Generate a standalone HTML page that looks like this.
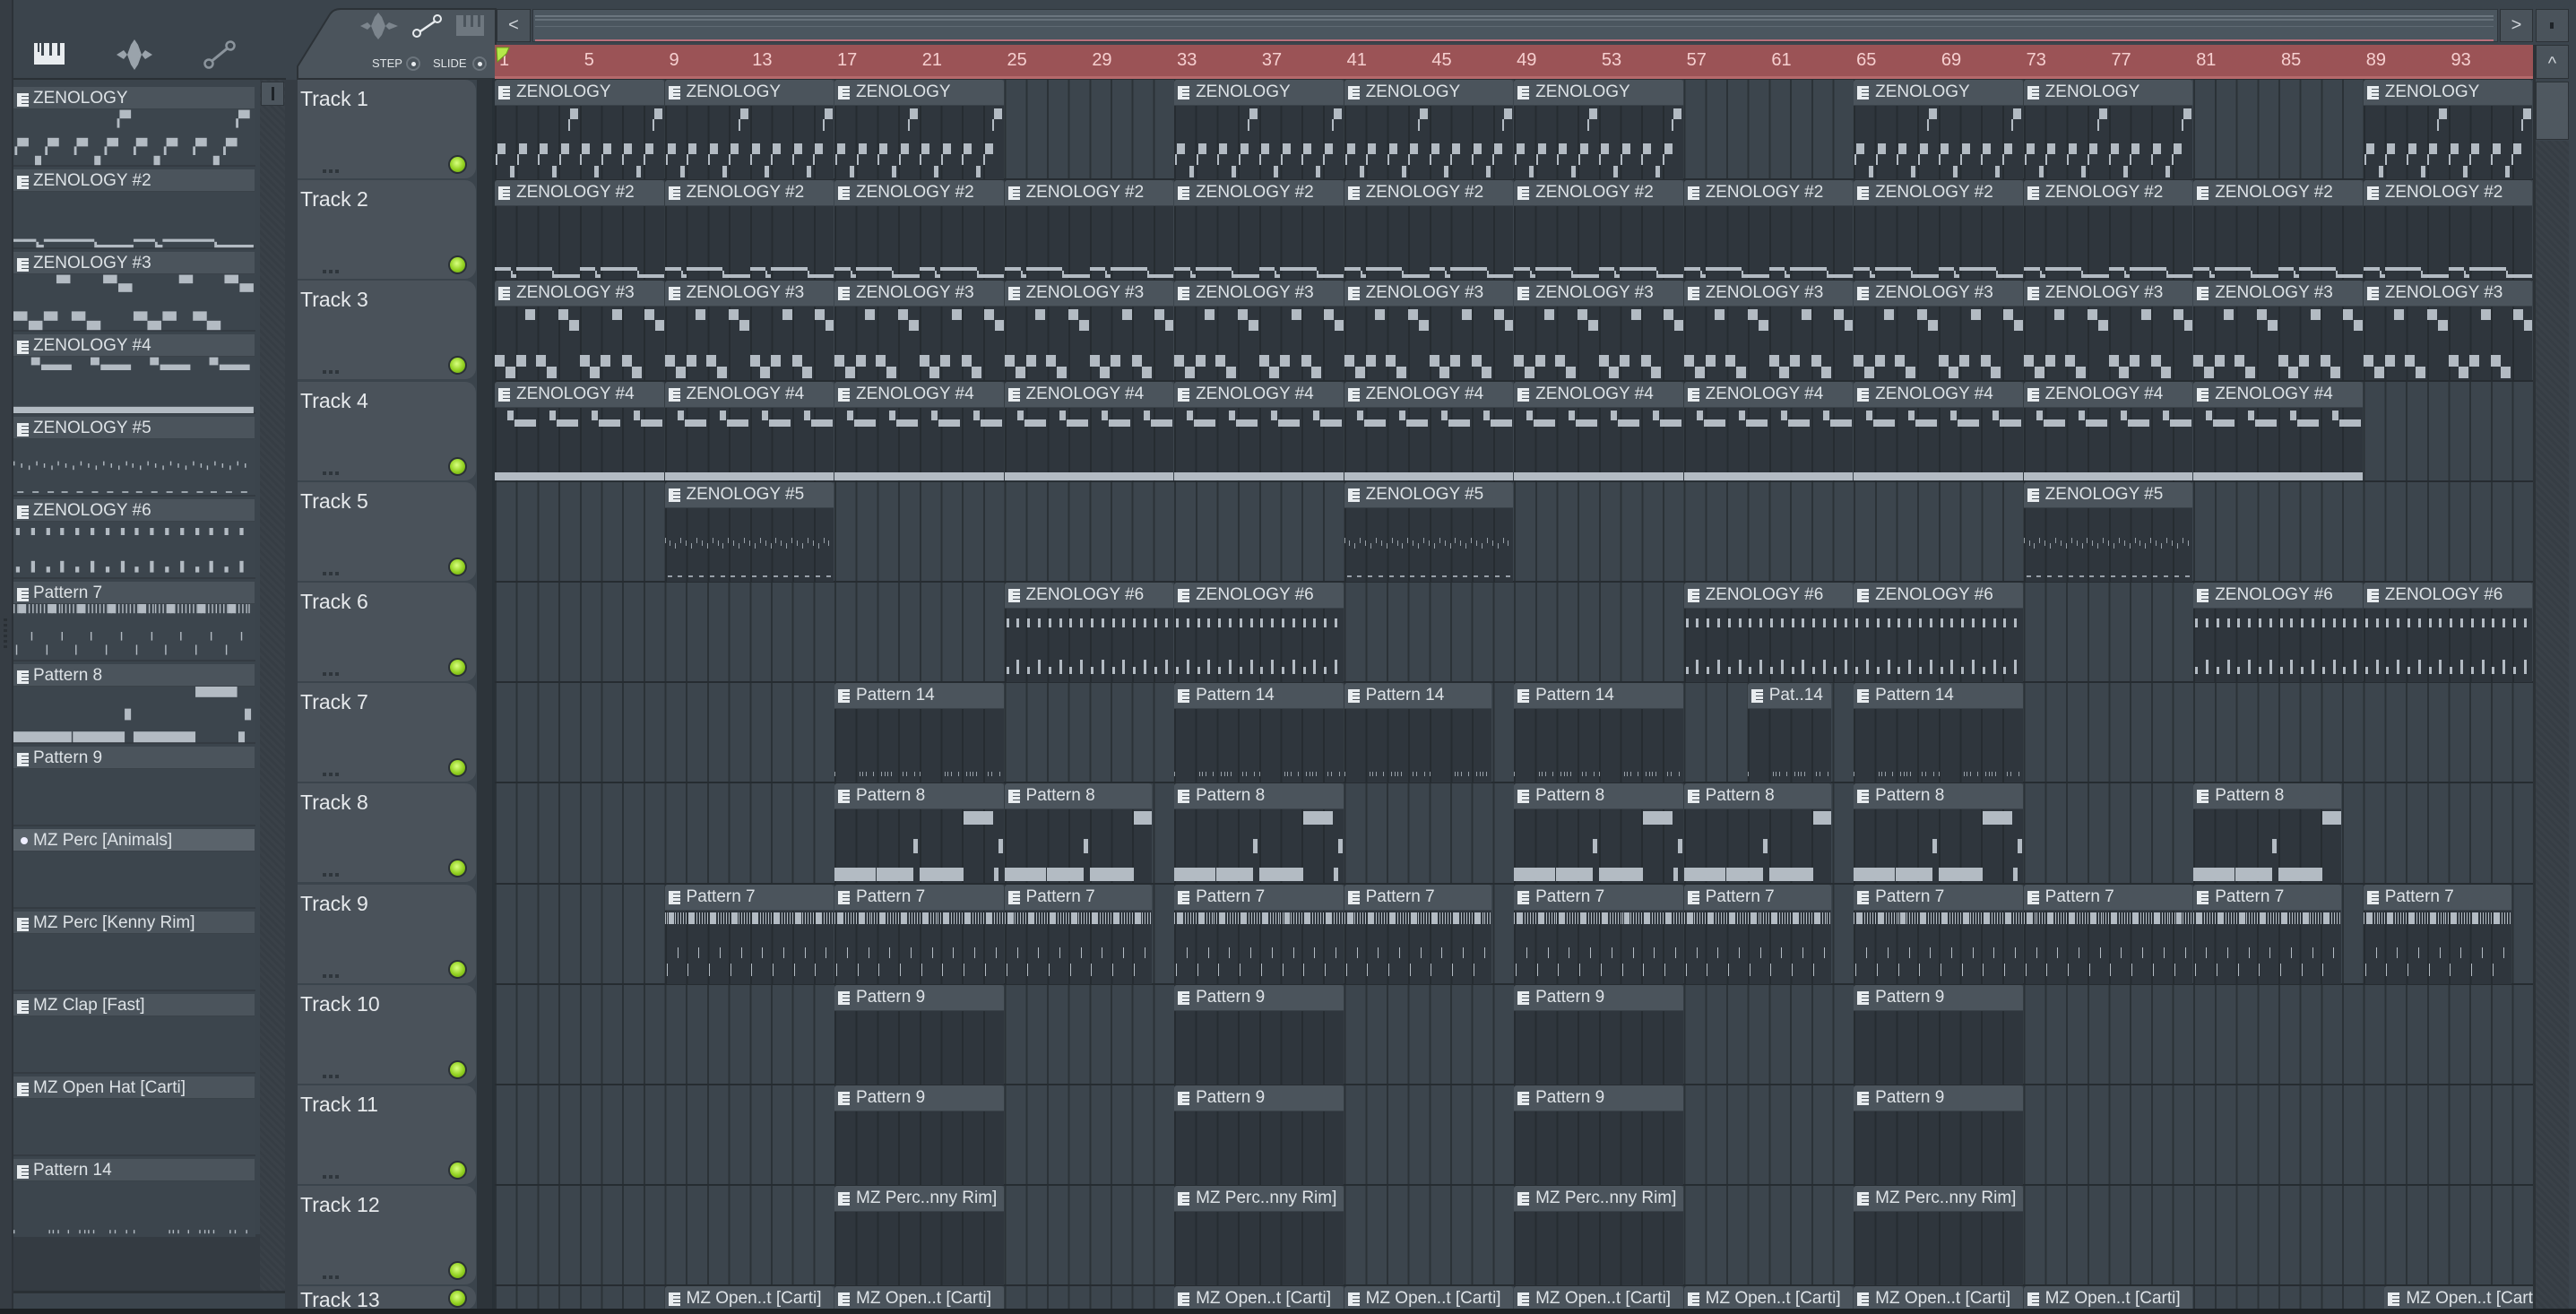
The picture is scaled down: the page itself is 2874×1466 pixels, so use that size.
<!DOCTYPE html>
<html><head><meta charset="utf-8">
<style>
*{margin:0;padding:0;box-sizing:border-box}
html{width:2874px;height:1466px;overflow:hidden}
body{width:2874px;height:1466px;overflow:hidden;background:#3b444c;font-family:"Liberation Sans",sans-serif;position:relative}
.a{position:absolute}
#grid{position:absolute;left:552px;top:88px;width:2274px;height:1372px;overflow:hidden;
background:repeating-linear-gradient(90deg,#2b3237 0 2px,#3c454d 2px 23.69px)}
.row{position:absolute;left:0;width:2274px;height:2px;background:#262c31}
.c{position:absolute;top:calc(var(--t)*112.2px + 1px);left:calc((var(--b) - 1)*23.69px);width:calc(var(--l,8)*23.69px - 1px);height:111px;overflow:hidden;
background:linear-gradient(#4b545c 0 28px,#3a4249 28px 29px,transparent 29px),repeating-linear-gradient(90deg,#262c31 0 2px,#2f363d 2px 23.69px);
color:#dde2e6;font-size:19px;line-height:28px;padding-left:24px;white-space:nowrap;border-radius:3px 3px 0 0}
.c i,.p i{position:absolute;left:4px;top:7px;width:13px;height:15px;background:#e8ecef;
background:linear-gradient(90deg,#e8ecef 0 5px,transparent 5px) ,repeating-linear-gradient(#e8ecef 0 3px,#4b545c 3px 4px,#e8ecef 4px 4px);}
.n{position:absolute;background:#b3bbc3}
.th{position:absolute;left:332px;width:199px;height:110px;background:#4a525a;border-radius:0 12px 12px 0;color:#e6e9ec;font-size:23px;padding:8px 0 0 3px;overflow:hidden}
.led{position:absolute;left:168px;top:84px;width:21px;height:21px;border-radius:50%;background:radial-gradient(circle at 45% 40%,#d8ff80,#92d020 55%,#5f9010);border:2px solid #2a3036}
.dots{position:absolute;left:28px;top:100px;width:18px;height:4px;background:repeating-linear-gradient(90deg,#2f363c 0 4px,transparent 4px 7px)}
.p{position:absolute;left:15px;width:270px;height:92px;overflow:hidden}
.p .h{position:absolute;left:0;top:0;width:269px;height:25px;background:#4b545c;border-bottom:1px solid #3a4249;color:#dde2e6;font-size:19px;line-height:25px;padding-left:22px;white-space:nowrap}
.p .b{position:absolute;left:0;top:25px;width:270px;height:64px;background:#3c454d;border-bottom:2px solid #343b42}
.pv{position:absolute;left:0;top:0;width:190px;height:112px;transform-origin:0 0;transform:scale(1.41,0.8)}
.rl{position:absolute;top:56px;color:#f6cfcf;font-size:20px}
</style></head><body>
<div class="a" style="left:0;top:0;width:15px;height:1460px;background:#363d44;border-right:2px solid #2c3238"></div>
<svg class="a" style="left:38px;top:48px" width="36" height="26"><rect x="0" y="0" width="34" height="24" fill="#e8ecef"/><rect x="8" y="0" width="3" height="14" fill="#3b444c"/><rect x="17" y="0" width="3" height="14" fill="#3b444c"/><rect x="26" y="0" width="3" height="14" fill="#3b444c"/><rect x="4" y="0" width="2" height="10" fill="#3b444c"/></svg>
<svg class="a" style="left:128px;top:44px" width="44" height="34"><path d="M2 17 L10 12 L14 17 L18 6 L22 0 L26 6 L30 17 L34 12 L42 17 L34 22 L30 17 L26 28 L22 34 L18 28 L14 17 L10 22 Z" fill="#9aa3ab"/></svg>
<svg class="a" style="left:226px;top:44px" width="38" height="34"><line x1="8" y1="26" x2="30" y2="8" stroke="#8b949c" stroke-width="3"/><circle cx="7" cy="27" r="4.5" fill="#3b444c" stroke="#8b949c" stroke-width="2.5"/><circle cx="31" cy="7" r="4.5" fill="#3b444c" stroke="#8b949c" stroke-width="2.5"/></svg>
<div class="a" style="left:15px;top:87px;width:304px;height:2px;background:#2a3035"></div>
<div class="a" style="left:15px;top:1377px;width:275px;height:65px;background:#343b42"></div>
<div class="a" style="left:15px;top:1440px;width:304px;height:3px;background:#2a3035"></div>
<div class="a" style="left:290px;top:89px;width:28px;height:1351px;background:repeating-linear-gradient(45deg,#363d44 0 3px,#3a4148 3px 6px)"></div>
<div class="a" style="left:291px;top:91px;width:26px;height:27px;background:#4d565e;border:1px solid #2e343a"><div class="a" style="left:11px;top:5px;width:3px;height:15px;background:#1e2328"></div></div>
<div class="a" style="left:318px;top:89px;width:14px;height:1371px;background:#353c43"></div>
<div class="a" style="left:4px;top:690px;width:4px;height:36px;background:repeating-linear-gradient(#2a3035 0 3px,transparent 3px 6px)"></div>
<svg class="a" style="left:15px;top:770px" width="12" height="22"><path d="M0 0 L11 11 L0 22 Z" fill="#e0405a"/></svg>

<div class="p" style="top:97px"><div class="b"></div><div class="pv" id="L0"></div><div class="h"><i></i>ZENOLOGY</div></div>
<div class="p" style="top:189px"><div class="b"></div><div class="pv" id="L1"></div><div class="h"><i></i>ZENOLOGY #2</div></div>
<div class="p" style="top:281px"><div class="b"></div><div class="pv" id="L2"></div><div class="h"><i></i>ZENOLOGY #3</div></div>
<div class="p" style="top:373px"><div class="b"></div><div class="pv" id="L3"></div><div class="h"><i></i>ZENOLOGY #4</div></div>
<div class="p" style="top:465px"><div class="b"></div><div class="pv" id="L4"></div><div class="h"><i></i>ZENOLOGY #5</div></div>
<div class="p" style="top:557px"><div class="b"></div><div class="pv" id="L5"></div><div class="h"><i></i>ZENOLOGY #6</div></div>
<div class="p" style="top:649px"><div class="b"></div><div class="pv" id="L6"></div><div class="h"><i></i>Pattern 7</div></div>
<div class="p" style="top:741px"><div class="b"></div><div class="pv" id="L7"></div><div class="h"><i></i>Pattern 8</div></div>
<div class="p" style="top:833px"><div class="b"></div><div class="h"><i></i>Pattern 9</div></div>
<div class="p" style="top:925px"><div class="b"></div><div class="h" style="background:#5a636b"><span class="a" style="left:8px;top:9px;width:8px;height:8px;border-radius:50%;background:#eef"></span>MZ Perc [Animals]</div></div>
<div class="p" style="top:1017px"><div class="b"></div><div class="h"><i></i>MZ Perc [Kenny Rim]</div></div>
<div class="p" style="top:1109px"><div class="b"></div><div class="h"><i></i>MZ Clap [Fast]</div></div>
<div class="p" style="top:1201px"><div class="b"></div><div class="h"><i></i>MZ Open Hat [Carti]</div></div>
<div class="p" style="top:1293px"><div class="b"></div><div class="pv" id="L13"></div><div class="h"><i></i>Pattern 14</div></div>

<svg class="a" style="left:330px;top:8px" width="225" height="82"><path d="M2 80 L2 66 L38 8 Q42 2 50 2 L223 2 L223 80 Z" fill="#4b545c" stroke="#2c3237" stroke-width="2"/></svg>
<svg class="a" style="left:400px;top:14px" width="46" height="30"><path d="M2 15 L10 11 L14 15 L18 5 L22 0 L26 5 L30 15 L34 11 L44 15 L34 19 L30 15 L26 25 L22 30 L18 25 L14 15 L10 19 Z" fill="#7c858d"/></svg>
<svg class="a" style="left:458px;top:14px" width="38" height="30"><line x1="8" y1="23" x2="30" y2="8" stroke="#e8ecef" stroke-width="2.5"/><circle cx="7" cy="23" r="4" fill="#4b545c" stroke="#e8ecef" stroke-width="2"/><circle cx="30" cy="7" r="4" fill="#4b545c" stroke="#e8ecef" stroke-width="2"/></svg>
<svg class="a" style="left:509px;top:17px" width="32" height="24"><rect width="31" height="23" fill="#6e777f"/><rect x="8" y="0" width="3" height="13" fill="#4b545c"/><rect x="16" y="0" width="3" height="13" fill="#4b545c"/><rect x="24" y="0" width="3" height="13" fill="#4b545c"/></svg>
<div class="a" style="left:415px;top:63px;font-size:13px;color:#dfe3e6">STEP</div>
<div class="a" style="left:453px;top:63px;width:16px;height:16px;border-radius:50%;border:2px solid #6b747c;background:#4b545c"><div class="a" style="left:4px;top:4px;width:5px;height:5px;border-radius:50%;background:#e8ecef"></div></div>
<div class="a" style="left:483px;top:63px;font-size:13px;color:#dfe3e6">SLIDE</div>
<div class="a" style="left:527px;top:63px;width:16px;height:16px;border-radius:50%;border:2px solid #6b747c;background:#4b545c"><div class="a" style="left:4px;top:4px;width:5px;height:5px;border-radius:50%;background:#e8ecef"></div></div>
<div class="a" style="left:554px;top:10px;width:38px;height:37px;background:#4a535b;border:1px solid #2c3237;color:#d0d5da;font-size:20px;text-align:center;line-height:34px">&lt;</div>
<div class="a" style="left:594px;top:10px;width:2193px;height:37px;background:#4b565f;border:1px solid #2f363c">
 <div class="a" style="left:2px;top:6px;width:2185px;height:2px;background:#6a757e"></div>
 <div class="a" style="left:2px;top:10px;width:2185px;height:2px;background:#66717a"></div>
 <div class="a" style="left:2px;top:18px;width:2185px;height:1px;background:#5f6a73"></div>
 <div class="a" style="left:2px;top:33px;width:2185px;height:2px;background:#b8707c"></div>
</div>
<div class="a" style="left:2789px;top:10px;width:37px;height:37px;background:#4a535b;border:1px solid #2c3237;color:#d0d5da;font-size:20px;text-align:center;line-height:34px">&gt;</div>
<div class="a" style="left:2829px;top:10px;width:37px;height:37px;background:#4a535b;border:1px solid #2c3237"><div class="a" style="left:15px;top:14px;width:4px;height:7px;background:#1e2328"></div></div>
<div class="a" style="left:2829px;top:50px;width:37px;height:38px;background:#4a535b;border:1px solid #2c3237;color:#d0d5da;font-size:20px;text-align:center;line-height:40px">^</div>
<div class="a" style="left:2829px;top:91px;width:37px;height:65px;background:#4f5860;border:1px solid #2c3237"></div>
<div class="a" style="left:2829px;top:157px;width:37px;height:1303px;background:repeating-linear-gradient(45deg,#363d44 0 3px,#3a4148 3px 6px)"></div>
<div class="a" style="left:2826px;top:50px;width:3px;height:1410px;background:#2c3237"></div>
<div class="a" id="ruler" style="left:552px;top:50px;width:2274px;height:38px;background:#9b5356;border-bottom:3px solid #b5696b;overflow:hidden"></div>
<svg class="a" style="left:553px;top:52px" width="16" height="18"><path d="M1 1 L15 1 L12 8 L2 17 Z" fill="#b5e84a" stroke="#6a9a1a"/></svg>
<div class="a" style="left:532px;top:88px;width:20px;height:1372px;background:#2d343a;border-right:3px solid #283036"></div>
<div id="grid"></div>
<div id="th"></div>
<div class="a" style="left:0;top:1460px;width:2874px;height:6px;background:#1c2125"></div>
<script>
var R=document.getElementById('ruler'),h='';
for(var b=1;b<=93;b+=4){h+='<div class="rl" style="top:6px;left:'+((b-1)*23.69+(b<10?5:3))+'px">'+b+'</div>';}
R.innerHTML=h;
var G=document.getElementById('grid');
for(var t=0;t<=13;t++){var r=document.createElement('div');r.className='row';r.style.top=(t*112.2-1)+'px';G.appendChild(r);}
var TH=document.getElementById('th'),s='';
for(var t=0;t<13;t++){s+='<div class="th" style="top:'+(89+t*112.2)+'px'+(t==12?';height:26px;padding-top:2px':'')+'"><span>Track '+(t+1)+'</span><div class="led" style="'+(t==12?'top:3px':'')+'"></div>'+(t<12?'<div class="dots"></div>':'')+'</div>';}
TH.innerHTML=s;
</script>
<div id="cl" style="position:absolute;left:552px;top:88px;width:2274px;height:1372px;overflow:hidden">
<div class="c z1" style="--t:0;--b:1"><i></i>ZENOLOGY</div><div class="c z1" style="--t:0;--b:9"><i></i>ZENOLOGY</div><div class="c z1" style="--t:0;--b:17"><i></i>ZENOLOGY</div><div class="c z1" style="--t:0;--b:33"><i></i>ZENOLOGY</div><div class="c z1" style="--t:0;--b:41"><i></i>ZENOLOGY</div><div class="c z1" style="--t:0;--b:49"><i></i>ZENOLOGY</div><div class="c z1" style="--t:0;--b:65"><i></i>ZENOLOGY</div><div class="c z1" style="--t:0;--b:73"><i></i>ZENOLOGY</div><div class="c z1" style="--t:0;--b:89"><i></i>ZENOLOGY</div>
<div class="c z2" style="--t:1;--b:1"><i></i>ZENOLOGY #2</div><div class="c z2" style="--t:1;--b:9"><i></i>ZENOLOGY #2</div><div class="c z2" style="--t:1;--b:17"><i></i>ZENOLOGY #2</div><div class="c z2" style="--t:1;--b:25"><i></i>ZENOLOGY #2</div><div class="c z2" style="--t:1;--b:33"><i></i>ZENOLOGY #2</div><div class="c z2" style="--t:1;--b:41"><i></i>ZENOLOGY #2</div><div class="c z2" style="--t:1;--b:49"><i></i>ZENOLOGY #2</div><div class="c z2" style="--t:1;--b:57"><i></i>ZENOLOGY #2</div><div class="c z2" style="--t:1;--b:65"><i></i>ZENOLOGY #2</div><div class="c z2" style="--t:1;--b:73"><i></i>ZENOLOGY #2</div><div class="c z2" style="--t:1;--b:81"><i></i>ZENOLOGY #2</div><div class="c z2" style="--t:1;--b:89"><i></i>ZENOLOGY #2</div>
<div class="c z3" style="--t:2;--b:1"><i></i>ZENOLOGY #3</div><div class="c z3" style="--t:2;--b:9"><i></i>ZENOLOGY #3</div><div class="c z3" style="--t:2;--b:17"><i></i>ZENOLOGY #3</div><div class="c z3" style="--t:2;--b:25"><i></i>ZENOLOGY #3</div><div class="c z3" style="--t:2;--b:33"><i></i>ZENOLOGY #3</div><div class="c z3" style="--t:2;--b:41"><i></i>ZENOLOGY #3</div><div class="c z3" style="--t:2;--b:49"><i></i>ZENOLOGY #3</div><div class="c z3" style="--t:2;--b:57"><i></i>ZENOLOGY #3</div><div class="c z3" style="--t:2;--b:65"><i></i>ZENOLOGY #3</div><div class="c z3" style="--t:2;--b:73"><i></i>ZENOLOGY #3</div><div class="c z3" style="--t:2;--b:81"><i></i>ZENOLOGY #3</div><div class="c z3" style="--t:2;--b:89"><i></i>ZENOLOGY #3</div>
<div class="c z4" style="--t:3;--b:1"><i></i>ZENOLOGY #4</div><div class="c z4" style="--t:3;--b:9"><i></i>ZENOLOGY #4</div><div class="c z4" style="--t:3;--b:17"><i></i>ZENOLOGY #4</div><div class="c z4" style="--t:3;--b:25"><i></i>ZENOLOGY #4</div><div class="c z4" style="--t:3;--b:33"><i></i>ZENOLOGY #4</div><div class="c z4" style="--t:3;--b:41"><i></i>ZENOLOGY #4</div><div class="c z4" style="--t:3;--b:49"><i></i>ZENOLOGY #4</div><div class="c z4" style="--t:3;--b:57"><i></i>ZENOLOGY #4</div><div class="c z4" style="--t:3;--b:65"><i></i>ZENOLOGY #4</div><div class="c z4" style="--t:3;--b:73"><i></i>ZENOLOGY #4</div><div class="c z4" style="--t:3;--b:81"><i></i>ZENOLOGY #4</div>
<div class="c z5" style="--t:4;--b:9"><i></i>ZENOLOGY #5</div><div class="c z5" style="--t:4;--b:41"><i></i>ZENOLOGY #5</div><div class="c z5" style="--t:4;--b:73"><i></i>ZENOLOGY #5</div>
<div class="c z6" style="--t:5;--b:25"><i></i>ZENOLOGY #6</div><div class="c z6" style="--t:5;--b:33"><i></i>ZENOLOGY #6</div><div class="c z6" style="--t:5;--b:57"><i></i>ZENOLOGY #6</div><div class="c z6" style="--t:5;--b:65"><i></i>ZENOLOGY #6</div><div class="c z6" style="--t:5;--b:81"><i></i>ZENOLOGY #6</div><div class="c z6" style="--t:5;--b:89"><i></i>ZENOLOGY #6</div>
<div class="c p14" style="--t:6;--b:17"><i></i>Pattern 14</div><div class="c p14" style="--t:6;--b:33"><i></i>Pattern 14</div><div class="c p14" style="--t:6;--b:41;--l:7"><i></i>Pattern 14</div><div class="c p14" style="--t:6;--b:49"><i></i>Pattern 14</div><div class="c p14" style="--t:6;--b:60;--l:4"><i></i>Pat..14</div><div class="c p14" style="--t:6;--b:65"><i></i>Pattern 14</div>
<div class="c p8" style="--t:7;--b:17"><i></i>Pattern 8</div><div class="c p8" style="--t:7;--b:25;--l:7"><i></i>Pattern 8</div><div class="c p8" style="--t:7;--b:33"><i></i>Pattern 8</div><div class="c p8" style="--t:7;--b:49"><i></i>Pattern 8</div><div class="c p8" style="--t:7;--b:57;--l:7"><i></i>Pattern 8</div><div class="c p8" style="--t:7;--b:65"><i></i>Pattern 8</div><div class="c p8" style="--t:7;--b:81;--l:7"><i></i>Pattern 8</div>
<div class="c p7" style="--t:8;--b:9"><i></i>Pattern 7</div><div class="c p7" style="--t:8;--b:17"><i></i>Pattern 7</div><div class="c p7" style="--t:8;--b:25;--l:7"><i></i>Pattern 7</div><div class="c p7" style="--t:8;--b:33"><i></i>Pattern 7</div><div class="c p7" style="--t:8;--b:41;--l:7"><i></i>Pattern 7</div><div class="c p7" style="--t:8;--b:49"><i></i>Pattern 7</div><div class="c p7" style="--t:8;--b:57;--l:7"><i></i>Pattern 7</div><div class="c p7" style="--t:8;--b:65"><i></i>Pattern 7</div><div class="c p7" style="--t:8;--b:73"><i></i>Pattern 7</div><div class="c p7" style="--t:8;--b:81;--l:7"><i></i>Pattern 7</div><div class="c p7" style="--t:8;--b:89;--l:7"><i></i>Pattern 7</div>
<div class="c" style="--t:9;--b:17"><i></i>Pattern 9</div><div class="c" style="--t:9;--b:33"><i></i>Pattern 9</div><div class="c" style="--t:9;--b:49"><i></i>Pattern 9</div><div class="c" style="--t:9;--b:65"><i></i>Pattern 9</div>
<div class="c" style="--t:10;--b:17"><i></i>Pattern 9</div><div class="c" style="--t:10;--b:33"><i></i>Pattern 9</div><div class="c" style="--t:10;--b:49"><i></i>Pattern 9</div><div class="c" style="--t:10;--b:65"><i></i>Pattern 9</div>
<div class="c" style="--t:11;--b:17"><i></i>MZ Perc..nny Rim]</div><div class="c" style="--t:11;--b:33"><i></i>MZ Perc..nny Rim]</div><div class="c" style="--t:11;--b:49"><i></i>MZ Perc..nny Rim]</div><div class="c" style="--t:11;--b:65"><i></i>MZ Perc..nny Rim]</div>
<div class="c" style="--t:12;--b:9"><i></i>MZ Open..t [Carti]</div><div class="c" style="--t:12;--b:17"><i></i>MZ Open..t [Carti]</div><div class="c" style="--t:12;--b:33"><i></i>MZ Open..t [Carti]</div><div class="c" style="--t:12;--b:41"><i></i>MZ Open..t [Carti]</div><div class="c" style="--t:12;--b:49"><i></i>MZ Open..t [Carti]</div><div class="c" style="--t:12;--b:57"><i></i>MZ Open..t [Carti]</div><div class="c" style="--t:12;--b:65"><i></i>MZ Open..t [Carti]</div><div class="c" style="--t:12;--b:73"><i></i>MZ Open..t [Carti]</div><div class="c" style="--t:12;--b:90"><i></i>MZ Open..t [Carti]</div>
</div>
<script>
function P(k){var r=[],i;
if(k=='z1'){for(i=0;i<2;i++){r.push([84+i*94,32,9,12],[82+i*94,44,2,13]);}
 for(i=0;i<8;i++){r.push([3+i*23.5,71,9,12],[1+i*23.5,83,2,12]);}
 for(i=0;i<4;i++){r.push([17+i*47,96,5,13]);}}
if(k=='z2'){var u=[[0,18],[24,64],[95,112],[118,159]],l=[[18,24],[64,95],[112,118],[159,190]];
 u.forEach(function(a){r.push([a[0],97,a[1]-a[0],4]);});l.forEach(function(a){r.push([a[0],105,a[1]-a[0],4]);});
 [18,64,112,159].forEach(function(x){r.push([x,101,2,4]);});}
if(k=='z3'){[34,71,131,167].forEach(function(x){r.push([x,32,11,12]);});[83,179].forEach(function(x){r.push([x,44,11,12]);});
 [0,24,46,95,118,142].forEach(function(x){r.push([x,83,11,13]);});[12,58,106,153].forEach(function(x){r.push([x,96,11,13]);});}
if(k=='z4'){for(i=0;i<4;i++){r.push([14+i*47,32,7,11],[22+i*47,42,24,8]);}r.push([0,101,190,9]);}
if(k=='z5'){for(i=0;i<32;i++){r.push([i*5.9,62+(i%3)*3,1,6]);}for(i=0;i<16;i++){r.push([i*11.8+3,104,5,2]);}}
if(k=='z6'){for(i=0;i<16;i++){r.push([2+i*11.8,40,3,10]);r.push([2+i*11.8,i%2?86:94,3,i%2?16:8]);}}
if(k=='p14'){[0,28,31,35,43,52,56,59,63,76,80,89].forEach(function(x){r.push([x,99,1,5]);r.push([x+95,99,1,5]);});}
if(k=='p8'){r=[[144,31,33,15],[88,62,5,16],[183,62,5,16],[0,94,46,15],[47,94,41,15],[95,94,49,15],[178,94,5,15]];}
if(k=='p7'){for(i=0;i<64;i++){r.push([i*2.96,31,1,13]);}for(i=0;i<8;i++){r.push([i*23.69+4,31,6,13],[i*23.69+2,88,1,14],[i*23.69+14,70,1,12]);}}
return r;}
function draw(el,k,op){var h='';P(k).forEach(function(a){h+='<div class="n" style="left:'+a[0]+'px;top:'+a[1]+'px;width:'+a[2]+'px;height:'+a[3]+'px'+(op?';opacity:'+op:'')+'"></div>';});el.insertAdjacentHTML('beforeend',h);}
['z1','z2','z3','z4','z5','z6','p14','p8','p7'].forEach(function(k){var e=document.querySelectorAll('.c.'+k);for(var j=0;j<e.length;j++){draw(e[j],k,k=='z5'||k=='p14'?0.8:0);}});
var m={L0:'z1',L1:'z2',L2:'z3',L3:'z4',L4:'z5',L5:'z6',L6:'p7',L7:'p8',L13:'p14'};
for(var id in m){draw(document.getElementById(id),m[id],0);}
</script>
</body></html>
